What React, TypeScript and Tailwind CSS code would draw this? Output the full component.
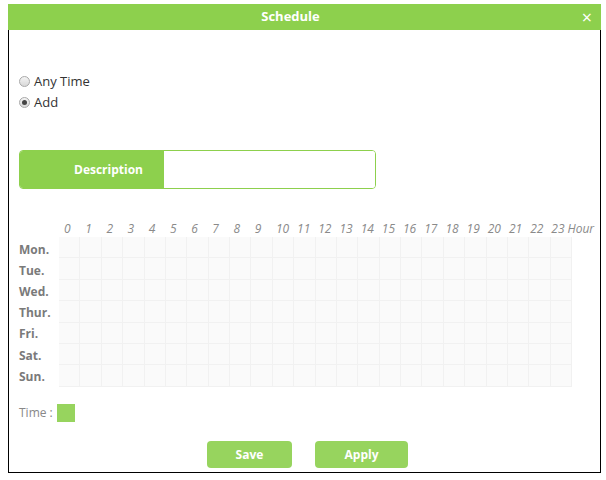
const days = ["Mon.", "Tue.", "Wed.", "Thur.", "Fri.", "Sat.", "Sun."];
const hours = Array.from({ length: 24 }, (_, i) => i);

function Radio({ checked, label }: { checked?: boolean; label: string }) {
  return (
    <label className="flex h-[21px] items-center gap-[4px] text-[13px] text-[#333]">
      <span className="flex h-[11px] w-[11px] items-center justify-center rounded-full border border-[#a9a9a9] bg-gradient-to-b from-[#f4f4f4] to-[#d8d8d8]">
        {checked ? <span className="h-[5px] w-[5px] rounded-full bg-[#444]" /> : null}
      </span>
      <span>{label}</span>
    </label>
  );
}

export default function App() {
  return (
    <div
      className="h-[480px] w-[606px] bg-white pl-[8px] pt-[4px]"
      style={{ fontFamily: '"Open Sans", "Noto Sans", sans-serif' }}
    >
      <div className="w-[593px]">
        <div className="relative flex h-[26px] items-center justify-center bg-[#8dd04d] pr-[28px] text-[13px] font-bold text-white">
          Schedule
          <span className="absolute right-[9px] top-[3px] text-[18px] font-normal leading-[20px]">×</span>
        </div>
        <div className="h-[443px] border-x border-b border-black pl-[10px] pt-[41px]">
          <div className="flex flex-col">
            <Radio label="Any Time" />
            <Radio checked label="Add" />
          </div>

          <div className="mt-[37px] flex h-[39px] w-[357px] overflow-hidden rounded-[4px] border border-[#8dd04d]">
            <div className="flex w-[144px] items-center bg-[#8dd04d] pl-[54px] text-[12px] font-bold text-white">
              Description
            </div>
            <div className="flex-1 bg-white" />
          </div>

          <div className="mt-[31px] flex">
            <div className="w-[40px] shrink-0 pt-[19px]">
              {days.map((d) => (
                <div key={d} className="flex h-[21.2px] items-center text-[12px] font-bold text-[#7a7a7a]">
                  {d}
                </div>
              ))}
            </div>
            <div>
              <div className="flex h-[17px] items-center">
                {hours.map((h) => (
                  <span key={h} className="w-[21.2px] shrink-0 pl-[5px] text-[12px] italic text-[#8a8a8a]">
                    {h}
                  </span>
                ))}
                <span className="shrink-0 text-[12px] italic text-[#8a8a8a]">Hour</span>
              </div>
              <div className="grid w-[513px] grid-cols-[repeat(24,minmax(0,1fr))] bg-[#fafafa]">
                {days.flatMap((d) =>
                  hours.map((h) => (
                    <div key={d + h} className="h-[21.4px] border-b border-r border-[#f1f1f1]" />
                  ))
                )}
              </div>
            </div>
          </div>

          <div className="mt-[17px] flex items-center gap-[4px] text-[12px] text-[#888]">
            <span>Time :</span>
            <span className="h-[18px] w-[18px] bg-[#97d45e]" />
          </div>

          <div className="mt-[19px] flex justify-center gap-[23px] pr-[4px]">
            <button className="h-[27px] w-[85px] rounded-[4px] bg-[#97d45e] text-[12px] font-bold text-white">
              Save
            </button>
            <button className="h-[27px] w-[93px] rounded-[4px] bg-[#97d45e] text-[12px] font-bold text-white">
              Apply
            </button>
          </div>
        </div>
      </div>
    </div>
  );
}
